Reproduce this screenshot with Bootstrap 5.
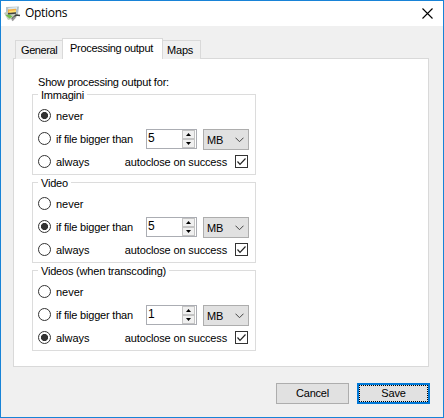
<!DOCTYPE html>
<html lang="en">
<head>
<meta charset="utf-8">
<title>Options</title>
<meta name="viewport" content="width=device-width, initial-scale=1">
<link href="https://cdn.jsdelivr.net/npm/bootstrap@5.3.0/dist/css/bootstrap.min.css" rel="stylesheet">
<style>
body{font:11px/13px "Liberation Sans",Arial,sans-serif;letter-spacing:-.2px;color:#000;width:444px;height:418px;overflow:hidden}
.win{width:444px;height:418px;border:1px solid #1883d7;background:#f0f0f0}
.titlebar{height:25px;background:#fff;padding-left:3px;padding-right:10px}
.titlebar h1{font:12px/16px "Open Sans","Noto Sans",sans-serif;letter-spacing:-.3px;margin:0 0 1px 4px}
.tabs{height:21px;margin:12px 0 -1px 14px}
.tabs .tab{height:19px;border:1px solid #d9d9d9;border-bottom:0;background:#f0f0f0;padding:3px 0 0 5px;white-space:nowrap}
.tabs .tab:first-child{letter-spacing:-.4px}
.tabs .tab:last-child{padding-left:4px}
.tabs .tab.on{height:21px;background:#fff;padding-left:7px;position:relative;width:101px;margin-left:-1px;margin-right:-1px;letter-spacing:-.3px}
.pane{margin-left:12px;width:416px;height:309px;border:1px solid #d9d9d9;background:#fff;padding:17px 0 0 18px}
.intro{padding-left:6px;height:18px}
.group{width:224px;height:81px;border:1px solid #dcdcdc;margin-bottom:7px}
.group h2{font:inherit;background:#fff;display:table;margin:-6px 0 0 5px;padding:0 3px;height:13px;white-space:nowrap}
.line{height:23px;padding-left:5px}
.line:first-of-type{margin-top:2px}
.label{white-space:nowrap;padding-top:2px}
.label.short{letter-spacing:0}
.radio{width:13px;height:13px;border:1px solid #333;border-radius:50%;background:#fff;margin-right:5px;flex:none}
.radio.on{background:radial-gradient(circle,#333 0 3.2px,#fff 3.9px)}
.num{width:51px;height:20px;border:1px solid #abadb3;padding:0 1px 0 1px;margin-bottom:1px;font-size:12px;line-height:17px}
.spin{width:13px;height:18px}
.spin i{height:9px;border:1px solid #c4c4c4;background:#f0f0f0;display:block;line-height:0}
.spin svg,.line svg{display:block}
.unit{width:46px;height:21px;border:1px solid #adadad;background:#e1e1e1;margin:0 6px;padding:1px 4px 0 3px}
.check{width:13px;height:13px;border:1px solid #333;margin:0 7px 0 8px}
.autoclose{letter-spacing:-.15px}
.cmd{width:73px;height:21px;border:1px solid #adadad;border-radius:0;background:#e1e1e1;font-size:11px;line-height:13px;letter-spacing:-.2px;padding:0;color:#000}
.cmd.def{border:2px solid #0078d7;outline:1px dotted #000;outline-offset:-3px}
.foot{margin:16px 13px 0 0;gap:8px}
</style>
</head>
<body>
<main class="win">
  <header class="titlebar d-flex align-items-center">
    <svg width="17" height="17" viewBox="0 0 17 17"><path d="M2 2 15 1.500l-1 8-12 1z" fill="#b5c2c8"/><path d="m4 3 9-1v2L5 6z" fill="#dce8ef"/><path d="m0 8 4-2 10 3-2 4-8 2z" fill="#c3cbbd"/><path d="m1.500 10 4 3.500 3-2-3-2z" fill="#72be48"/><path d="m4 4.500 8-.7v3.500l-8 .7z" fill="#f3ad43"/><path d="m5 6 7-.7v2L6 9z" fill="#ffdf70"/><path d="m4 8.700 8-.7M8 14l4-4 4 .5" stroke="#3f423f" stroke-width="1.500" fill="none"/><path d="m8 15.500 3-3.500" stroke="#999" stroke-width="2"/></svg>
    <h1>Options</h1>
    <svg class="ms-auto" width="11" height="11" viewBox="0 0 11 11"><path d="m.5.5 10 10m0-10-10 10" stroke="#000" stroke-width="1.1"/></svg>
  </header>
  <nav class="tabs d-flex align-items-end">
    <div class="tab" style="width:48px">General</div>
    <div class="tab on">Processing output</div>
    <div class="tab" style="width:39px">Maps</div>
  </nav>
  <section class="pane">
    <div class="intro">Show processing output for:</div>
    <div id="groups"></div>
  </section>
  <footer class="foot d-flex justify-content-end">
    <button class="btn cmd">Cancel</button>
    <button class="btn cmd def">Save</button>
  </footer>
</main>
<script src="https://cdn.jsdelivr.net/npm/bootstrap@5.3.0/dist/js/bootstrap.bundle.min.js"></script>
<script>
const groups=[["Immagini",0,5],["Video",1,5],["Videos (when transcoding)",2,1]];
document.getElementById("groups").innerHTML=groups.map(([name,sel,n])=>{
  const r=i=>`<span class="radio${i===sel?" on":""}"></span>`;
  return `<div class="group"><h2>${name}</h2>
  <div class="line d-flex align-items-center">${r(0)}<span class="label short">never</span></div>
  <div class="line d-flex align-items-center">${r(1)}<span class="label">if file bigger than</span>
    <div class="num d-flex justify-content-between ms-auto align-self-end"><span>${n}</span><span class="spin"><i><svg width="11" height="7"><path d="M3 5h5L5.5 2z"/></svg></i><i><svg width="11" height="7"><path d="M3 2h5L5.5 5z"/></svg></i></span></div>
    <div class="unit d-flex align-items-center justify-content-between align-self-end"><span>MB</span><svg width="9" height="6"><path d="m.5.7 4 4 4-4" fill="none" stroke="#444"/></svg></div></div>
  <div class="line d-flex align-items-center">${r(2)}<span class="label short">always</span><span class="label autoclose ms-auto">autoclose on success</span>
    <span class="check"><svg width="11" height="11"><path d="m1.5 5.500 2.500 2.800L9.500 2.500" fill="none" stroke="#222" stroke-width="1.200"/></svg></span></div></div>`;
}).join("");
</script>
</body>
</html>
